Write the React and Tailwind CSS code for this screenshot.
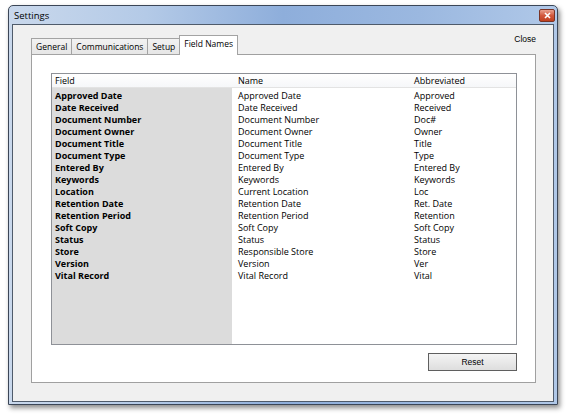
const fields = [
  ['Approved Date', 'Approved Date', 'Approved'],
  ['Date Received', 'Date Received', 'Received'],
  ['Document Number', 'Document Number', 'Doc#'],
  ['Document Owner', 'Document Owner', 'Owner'],
  ['Document Title', 'Document Title', 'Title'],
  ['Document Type', 'Document Type', 'Type'],
  ['Entered By', 'Entered By', 'Entered By'],
  ['Keywords', 'Keywords', 'Keywords'],
  ['Location', 'Current Location', 'Loc'],
  ['Retention Date', 'Retention Date', 'Ret. Date'],
  ['Retention Period', 'Retention Period', 'Retention'],
  ['Soft Copy', 'Soft Copy', 'Soft Copy'],
  ['Status', 'Status', 'Status'],
  ['Store', 'Responsible Store', 'Store'],
  ['Version', 'Version', 'Ver'],
  ['Vital Record', 'Vital Record', 'Vital'],
];

const tabs = ['General', 'Communications', 'Setup'];

const App = () => {
  return (
    <div className="w-[568px] h-[419px] bg-white pl-[8px] pt-[5px] font-['Open_Sans',sans-serif] text-black">
      <div className="w-[550px] h-[400px] flex flex-col border border-[#3b4657] rounded-t-[5px] px-[3px] pb-[2px] bg-[linear-gradient(90deg,#c9d8ec_0%,#b4cae7_25%,#8eaedb_50%,#9bb8e0_75%,#b0c8e8_100%)] shadow-[2px_3px_5px_rgba(0,0,0,0.45)]">
        <div className="h-[18px] flex items-center justify-between pl-[2px]">
          <span className="text-[9.5px] leading-none mt-[1px]">Settings</span>
          <div className="w-[16px] h-[13px] -mr-[1px] rounded-[2px] border border-[#7a3325] bg-[linear-gradient(180deg,#e9a18e_0%,#d2583d_50%,#c0401f_100%)] flex items-center justify-center">
            <svg width="7" height="7" viewBox="0 0 7 7">
              <path d="M1 1 L6 6 M6 1 L1 6" stroke="white" strokeWidth="1.6" />
            </svg>
          </div>
        </div>

        <div className="flex-1 flex flex-col border border-[#4f5b6b] bg-[#f0f0f0] pt-[10px] pl-[18px] pr-[17px] pb-[18px]">
          <div className="flex items-end -mb-[1px] relative z-10">
            {tabs.map((t) => (
              <div
                key={t}
                className="h-[17px] px-[4px] border border-r-0 border-[#a3a3a3] bg-[linear-gradient(180deg,#f2f2f2_0%,#e6e6e6_100%)] text-[8.5px] leading-[15px]"
              >
                {t}
              </div>
            ))}
            <div className="h-[17px] w-[2px] border-l border-[#a3a3a3]" />
            <div className="-ml-[2px] h-[20px] px-[4px] border border-b-0 border-[#a3a3a3] bg-white text-[8.5px] leading-[16px]">
              Field Names
            </div>
            <span className="ml-auto self-start -mt-[2px] font-['Liberation_Sans',sans-serif] text-[8.5px]">
              Close
            </span>
          </div>

          <div className="flex-1 flex flex-col border border-[#a0a0a0] bg-white pt-[18px] pl-[19px] pr-[18px] pb-[10px]">
            <div className="h-[272px] flex flex-col border border-[#8e9197] text-[9px]">
              <div className="h-[14px] flex items-center border-b border-[#e3e3e3] bg-[linear-gradient(180deg,#ffffff_0%,#f6f7f9_100%)] leading-none">
                <div className="w-[180px] pl-[3px]">Field</div>
                <div className="w-[179px] pl-[6px]">Name</div>
                <div className="flex-1 pl-[3px]">Abbreviated</div>
              </div>
              <div className="flex-1 flex">
                <div className="w-[180px] bg-[#dcdcdc] pl-[3px] pt-[2px]">
                  {fields.map(([f]) => (
                    <div key={f} className="h-[12px] leading-[12px] font-bold">
                      {f}
                    </div>
                  ))}
                </div>
                <div className="w-[179px] pl-[6px] pt-[2px]">
                  {fields.map(([f, n]) => (
                    <div key={f} className="h-[12px] leading-[12px]">
                      {n}
                    </div>
                  ))}
                </div>
                <div className="flex-1 pl-[3px] pt-[2px]">
                  {fields.map(([f, , a]) => (
                    <div key={f} className="h-[12px] leading-[12px]">
                      {a}
                    </div>
                  ))}
                </div>
              </div>
            </div>

            <button className="self-end mt-[8px] w-[89px] h-[18px] border border-[#5f5f5f] bg-[linear-gradient(180deg,#f4f4f4_0%,#e9e9e9_50%,#dedede_100%)] font-['Liberation_Sans',sans-serif] text-[8.5px] leading-none">
              Reset
            </button>
          </div>
        </div>
      </div>
    </div>
  );
};

export default App;
